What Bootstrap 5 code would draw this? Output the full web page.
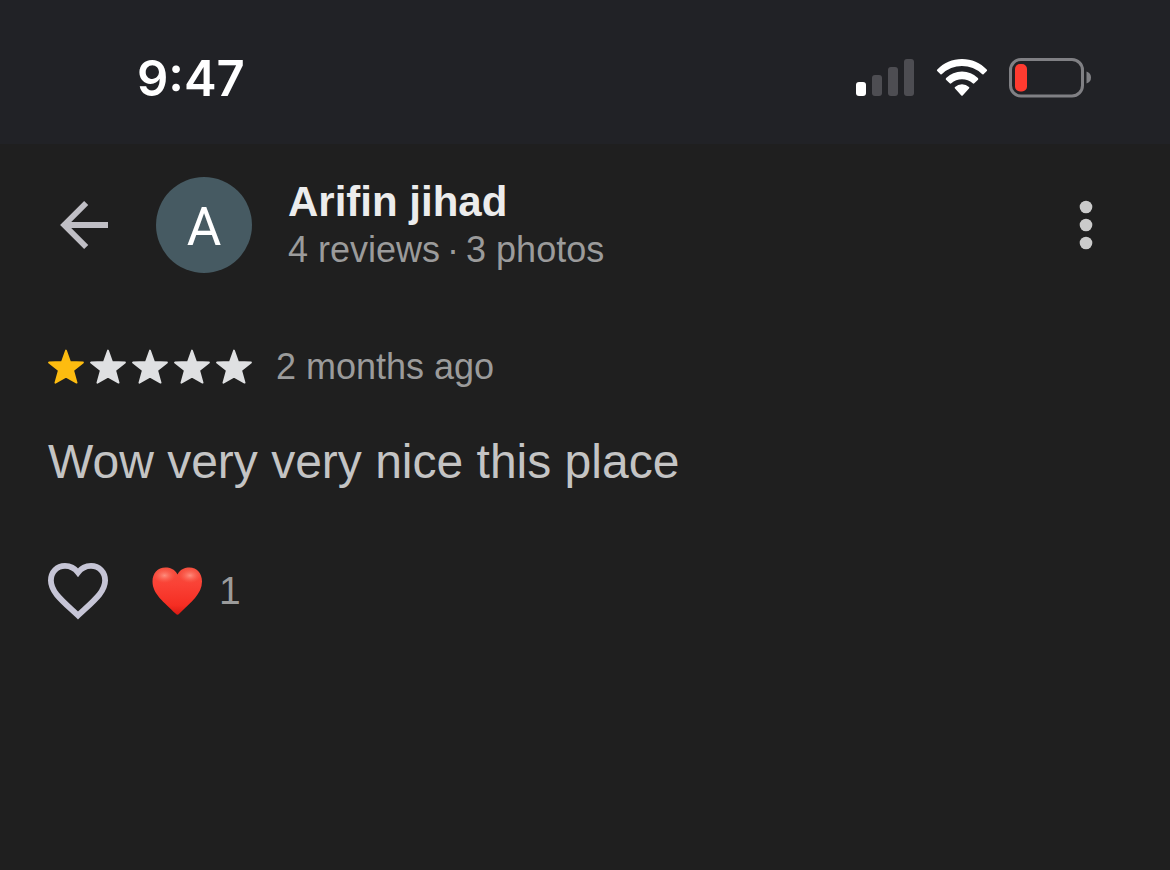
<!DOCTYPE html>
<html lang="en">
<head>
<meta charset="utf-8">
<meta name="viewport" content="width=device-width, initial-scale=1">
<title>Review by Arifin jihad</title>
<link href="https://cdn.jsdelivr.net/npm/bootstrap@5.3.0/dist/css/bootstrap.min.css" rel="stylesheet">
<style>
  body { background: #1f1f1f; color: #c4c4c4; font-family: "Liberation Sans", Arial, sans-serif; }
  svg { display: block; flex-shrink: 0; }
  .status-bar { background: #212226; height: 144px; padding: 12px 79px 0 137px; }
  .clock { font: 600 49px/60px Inter, sans-serif; color: #fff; padding-top: 2px; }
  .review-head { padding: 32px 48px 0; }
  .plain-btn { color: #c0bfc5; background: none; border: 0; padding: 0; }
  .plain-btn:hover { color: #fff; }
  .back { width: 72px; padding-left: 12px; margin-right: 36px; }
  .avatar { width: 96px; height: 96px; background: #465a62; color: #fff; font: 400 53px/100px Roboto, sans-serif; margin-right: 36px; }
  .author { font-size: 42px; line-height: 48px; font-weight: 700; color: #ececec; padding-top: 2px; }
  .meta { font-size: 36px; line-height: 48px; color: #9b9b9b; }
  .separator { margin: 0 -3px; }
  .menu { width: 60px; }
  .review-body { padding: 69px 48px 48px; }
  .stars { gap: 6px; margin-right: 24px; }
  .comment { font-size: 48px; line-height: 60px; margin: 41px 0 68px; }
  .count { font-size: 39px; line-height: 62px; color: #9b9b9b; margin-left: 15px; }
  .like { margin-right: 42px; color: #c6c5d6; }
</style>
</head>
<body>
<svg width="0" height="0" class="position-absolute" aria-hidden="true">
  <symbol id="star" viewBox="0 0 36 36"><path d="M18 1.500 22.100 13 35 13.500 25.200 21.400 28.600 33.700 18 27.600 7.400 33.700 10.800 21.400 1 13.500 13.900 13Z" fill="currentColor" stroke="currentColor" stroke-width="1.800" stroke-linejoin="round"/></symbol>
</svg>
<div class="status-bar d-flex align-items-center justify-content-between">
  <time class="clock">9:47</time>
  <div class="d-flex align-items-center">
    <svg width="60" height="40" viewBox="0 0 60 40" class="me-3" role="img" aria-label="Signal">
      <rect x="0" y="24" width="10" height="14" rx="3" fill="#fff"/>
      <g fill="#4d4d52"><rect x="16" y="17" width="10" height="21" rx="3"/><rect x="32" y="9" width="10" height="29" rx="3"/><rect x="48" y="1" width="10" height="37" rx="3"/></g>
    </svg>
    <svg width="60" height="40" viewBox="0 0 60 40" class="me-3" role="img" aria-label="Wi-Fi" fill="#fff">
      <path d="M30 1C39.500 1 48.500 5 54.700 11.500Q55.500 12.300 54.800 13L51.500 16.200Q50.800 16.900 50 16.100A28.600 28.600 0 0 0 10 16.100Q9.200 16.900 8.500 16.200L5.200 13Q4.500 12.300 5.300 11.500C11.500 5 20.500 1 30 1Z"/>
      <path d="M30 13.500Q39.300 13.500 45.900 20.100Q46.700 21 46 21.800L42.300 25.300Q41.500 26 40.700 25.300A15.800 15.800 0 0 0 19.300 25.300Q18.500 26 17.700 25.300L14 21.800Q13.300 21 14.100 20.100Q20.700 13.500 30 13.500Z"/>
      <path d="M30 26.200Q34 26.200 37 28.900Q37.800 29.600 37 30.500L30.900 37.300Q30 38.300 29.100 37.300L23 30.500Q22.200 29.600 23 28.900Q26 26.200 30 26.200Z"/>
    </svg>
    <svg width="83" height="40" viewBox="0 0 83 40" role="img" aria-label="Battery low">
      <rect x="2.500" y="1.500" width="72" height="36.500" rx="10.500" fill="none" stroke="#808084" stroke-width="3"/>
      <rect x="7" y="6" width="12" height="27.500" rx="5" fill="#ff3b30"/>
      <path d="M78.500 13.500Q83 15 83 19.500T78.500 25.500Z" fill="#808084"/>
    </svg>
  </div>
</div>
<header class="review-head d-flex align-items-center">
  <button type="button" class="plain-btn back" aria-label="Back">
    <svg width="50" height="50" viewBox="0 0 50 50" fill="none" stroke="currentColor" stroke-width="5.800"><path d="M26.200 3 4.200 25 26.200 47M5 25H48"/></svg>
  </button>
  <div class="avatar rounded-circle text-center flex-shrink-0">A</div>
  <div class="flex-grow-1">
    <h1 class="author mb-0">Arifin jihad</h1>
    <div class="meta">4 reviews<span class="separator"> · </span>3 photos</div>
  </div>
  <button type="button" class="plain-btn menu" aria-label="More options">
    <svg width="60" height="60" viewBox="0 0 60 60" fill="#cbcbcb"><circle cx="24" cy="12" r="6.300"/><circle cx="24" cy="30" r="6.300"/><circle cx="24" cy="48" r="6.300"/></svg>
  </button>
</header>
<main class="review-body">
  <div class="d-flex align-items-center">
    <div class="stars d-flex" role="img" aria-label="1 out of 5 stars">
      <svg width="36" height="36" color="#fdbc10"><use href="#star"/></svg>
      <svg width="36" height="36" color="#dfe0e2"><use href="#star"/></svg>
      <svg width="36" height="36" color="#dfe0e2"><use href="#star"/></svg>
      <svg width="36" height="36" color="#dfe0e2"><use href="#star"/></svg>
      <svg width="36" height="36" color="#dfe0e2"><use href="#star"/></svg>
    </div>
    <span class="meta">2 months ago</span>
  </div>
  <p class="comment">Wow very very nice this place</p>
  <div class="d-flex align-items-center">
    <button type="button" class="plain-btn like" aria-label="Like">
      <svg width="60" height="60" viewBox="0 0 60 60" fill="none" stroke="currentColor" stroke-width="5.800"><path d="M30 11.500C26.500 6.800 21.500 4.800 17 4.800C9 4.800 2.900 11 2.900 19.500C2.900 31 14 39.500 30 54.500C46 39.500 57.100 31 57.100 19.500C57.100 11 51 4.800 43 4.800C38.500 4.800 33.500 6.800 30 11.500Z"/></svg>
    </button>
    <svg width="54" height="54" viewBox="0 0 54 54" role="img" aria-label="Heart reactions">
      <defs>
        <linearGradient id="red" x1="0" y1="0" x2="0" y2="1"><stop offset="0" stop-color="#f4503f"/><stop offset=".35" stop-color="#fa4236"/><stop offset=".8" stop-color="#f52e23"/><stop offset="1" stop-color="#d91a13"/></linearGradient>
        <radialGradient id="shine"><stop offset="0" stop-color="#ff9a8a" stop-opacity=".85"/><stop offset="1" stop-color="#ff6b59" stop-opacity="0"/></radialGradient>
      </defs>
      <path d="M27.500 10.500C24.500 5 20 3.500 15.500 3.500C7.500 3.500 2.500 9.500 2.500 17.500C2.500 30 14 38 25.800 49.800Q27.500 51.500 29.200 49.800C41 38 52 30 52 17.500C52 9.500 47 3.500 39.500 3.500C35 3.500 30.500 5 27.500 10.500Z" fill="url(#red)"/>
      <ellipse cx="14.500" cy="11.500" rx="11" ry="7.500" fill="url(#shine)"/>
      <ellipse cx="40" cy="11.500" rx="11" ry="7.500" fill="url(#shine)"/>
    </svg>
    <span class="count">1</span>
  </div>
</main>
<script src="https://cdn.jsdelivr.net/npm/bootstrap@5.3.0/dist/js/bootstrap.bundle.min.js"></script>
</body>
</html>
